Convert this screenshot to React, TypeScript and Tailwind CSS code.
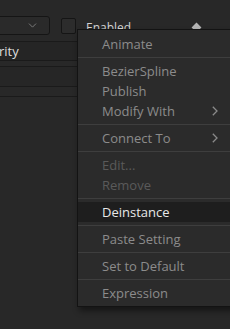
import { ChevronDown } from 'lucide-react';

type Entry =
  | { kind: 'item'; label: string; disabled?: boolean; active?: boolean; submenu?: boolean }
  | { kind: 'sep' };

const entries: Entry[] = [
  { kind: 'item', label: 'Animate' },
  { kind: 'sep' },
  { kind: 'item', label: 'BezierSpline' },
  { kind: 'item', label: 'Publish' },
  { kind: 'item', label: 'Modify With', submenu: true },
  { kind: 'sep' },
  { kind: 'item', label: 'Connect To', submenu: true },
  { kind: 'sep' },
  { kind: 'item', label: 'Edit...', disabled: true },
  { kind: 'item', label: 'Remove', disabled: true },
  { kind: 'sep' },
  { kind: 'item', label: 'Deinstance', active: true },
  { kind: 'sep' },
  { kind: 'item', label: 'Paste Setting' },
  { kind: 'sep' },
  { kind: 'item', label: 'Set to Default' },
  { kind: 'sep' },
  { kind: 'item', label: 'Expression' },
];

function SubArrow() {
  return (
    <svg width="6" height="10" viewBox="0 0 6 10" className="shrink-0">
      <path d="M0.8 0.8 L5 5 L0.8 9.2" fill="none" stroke="#8a8a8a" strokeWidth="1.3" />
    </svg>
  );
}

export default function App() {
  return (
    <div className="relative h-[329px] w-[230px] overflow-hidden bg-[#282828] font-['Open_Sans',sans-serif]">
      {/* inspector rows behind the menu */}
      <div className="h-[16px]" />
      <div className="flex h-[19px] items-center">
        <div className="ml-[-10px] flex h-[19px] w-[60px] items-center justify-end rounded-[3px] border border-[#151515] bg-[#2a2a2a] pr-[10px]">
          <ChevronDown size={13} strokeWidth={1.7} color="#808080" />
        </div>
        <div className="ml-[11px] h-[16px] w-[15px] rounded-[2px] border border-[#151515] bg-[#2c2c2c]" />
        <span className="ml-[10px] pt-[4px] text-[12px] leading-none text-[#d4d4d4]">Enabled</span>
        <div className="ml-[62px] mt-[3px] h-[7px] w-[7px] rotate-45 bg-[#b4b4b4]" />
      </div>
      <div className="mt-[6px] flex h-[20px] items-center border-y border-[#1a1a1a] bg-[#252525]">
        <span className="ml-[-1px] text-[13px] leading-none text-[#dedede]">rity</span>
      </div>
      <div className="mt-[5px] h-[21px] border-y border-[#1a1a1a] bg-[#262626]" />
      <div className="h-[10px] border-b border-[#1a1a1a] bg-[#282828]" />

      {/* context menu */}
      <div className="absolute left-[77px] top-[29px] w-[160px] border border-[#131313] bg-[#2b2b2b] pb-[3px] pt-[4px] shadow-[2px_4px_6px_rgba(0,0,0,0.45)]">
        {entries.map((e, i) =>
          e.kind === 'sep' ? (
            <div key={i} className="py-[3px]">
              <div className="h-px bg-[#3e3e3e]" />
            </div>
          ) : (
            <div
              key={i}
              className={`flex h-[20px] items-center pl-[24px] pr-[18px] text-[13px] leading-none ${
                e.active ? 'bg-[#1e1e1e] text-[#e8e8e8]' : e.disabled ? 'text-[#5a5a5a]' : 'text-[#8c8c8c]'
              }`}
            >
              <span className="flex-1">{e.label}</span>
              {e.submenu && <SubArrow />}
            </div>
          ),
        )}
      </div>
    </div>
  );
}
